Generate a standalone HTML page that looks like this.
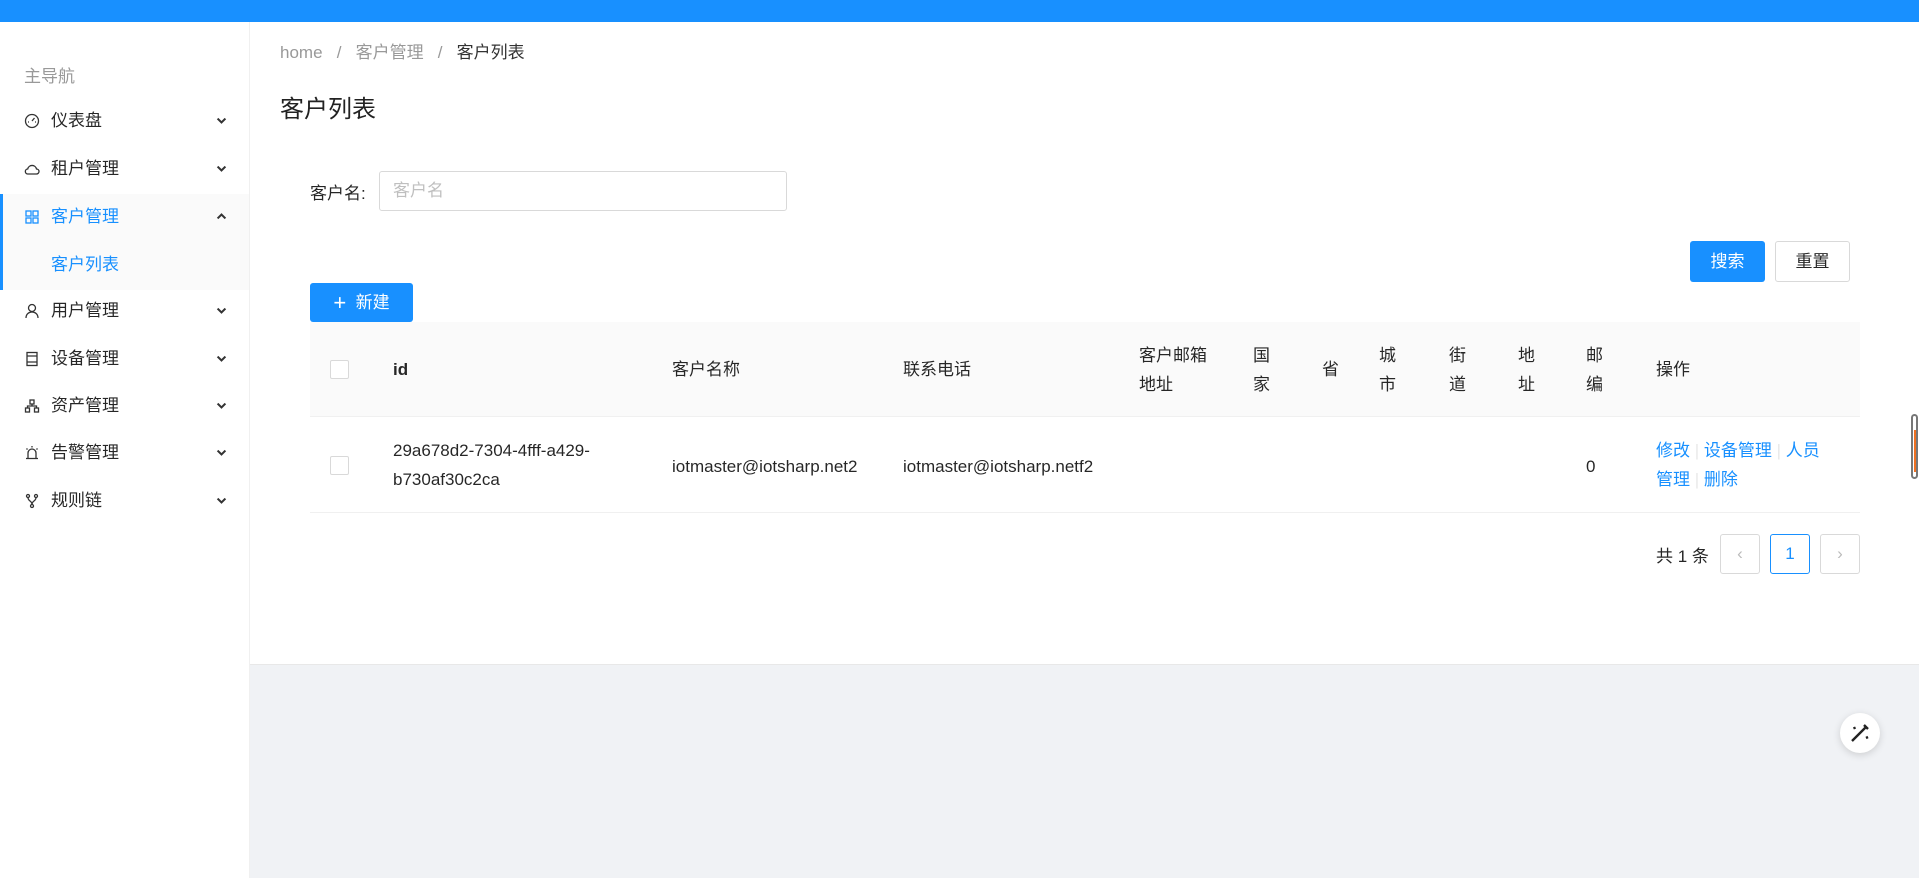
<!DOCTYPE html>
<html><head><meta charset="utf-8"><style>
*{margin:0;padding:0;box-sizing:border-box}
body{width:1919px;height:878px;overflow:hidden;background:#f0f2f5;font-family:"Liberation Sans","Noto Sans CJK SC",sans-serif;font-size:17px;color:rgba(0,0,0,.85);position:relative}
.a{position:absolute;white-space:nowrap}
.top{left:0;top:0;width:1919px;height:22px;background:#1890ff;box-shadow:0 2px 8px rgba(0,0,0,.15)}
.side{left:0;top:22px;width:250px;height:856px;background:#fff;border-right:1px solid #f0f0f0}
.main{left:250px;top:22px;width:1669px;height:643px;background:#fff;border-bottom:1px solid #e8e8e8}
.mi{left:0;width:249px;height:48px;line-height:48px}
.mi .ic{position:absolute;left:24px;top:16px;width:16px;height:16px}
.mi .t{position:absolute;left:51px}
.mi .ch{position:absolute;left:215px;top:17px;width:13px;height:13px}
.btn{border-radius:3px;text-align:center}
.th{top:322px;height:95px;background:#fafafa;border-bottom:1px solid #f0f0f0;left:310px;width:1550px}
.cell{line-height:29px;font-size:17px}
.cb{width:19px;height:19px;border:1px solid #d9d9d9;border-radius:2px;background:#fff}
.pg{width:40px;height:40px;border:1px solid #d9d9d9;border-radius:3px;background:#fff;text-align:center;line-height:38px;color:#bbb}
.lk{color:#1890ff}
.sep{color:#e8e8e8}
</style></head><body>
<div class="a top"></div>
<div class="a side">
 <div class="a" style="left:24px;top:40px;color:#999;font-size:17px">主导航</div>
</div>
<div class="a" style="left:0;top:194px;width:249px;height:96px;background:#fafafa;border-left:3px solid #1890ff"></div>
<div class="a mi" style="top:97px"><svg class="ic" viewBox="0 0 16 16" fill="none" stroke="#333" stroke-width="1.3"><circle cx="8" cy="8" r="6.5"/><path d="M8 8l2.5-3M4 9h1M11 9h1"/></svg><span class="t">仪表盘</span><svg class="ch" viewBox="0 0 10 10" fill="none" stroke="#333" stroke-width="1.6"><path d="M2 3.5l3 3 3-3"/></svg></div>
<div class="a mi" style="top:145px"><svg class="ic" viewBox="0 0 16 16" fill="none" stroke="#333" stroke-width="1.3"><path d="M4 13h8.5a2.5 2.5 0 0 0 0-5 4.5 4.5 0 0 0-8.8 0A2.5 2.5 0 0 0 4 13z"/></svg><span class="t">租户管理</span><svg class="ch" viewBox="0 0 10 10" fill="none" stroke="#333" stroke-width="1.6"><path d="M2 3.5l3 3 3-3"/></svg></div>
<div class="a mi" style="top:193px;color:#1890ff"><svg class="ic" viewBox="0 0 16 16" fill="none" stroke="#1890ff" stroke-width="1.3"><rect x="2" y="2" width="5" height="5"/><rect x="9" y="2" width="5" height="5"/><rect x="2" y="9" width="5" height="5"/><rect x="9" y="9" width="5" height="5"/></svg><span class="t">客户管理</span><svg class="ch" viewBox="0 0 10 10" fill="none" stroke="#333" stroke-width="1.6"><path d="M2 6.5l3-3 3 3"/></svg></div>
<div class="a mi" style="top:241px;color:#1890ff"><span class="t" style="left:51px">客户列表</span></div>
<div class="a mi" style="top:287px"><svg class="ic" viewBox="0 0 16 16" fill="none" stroke="#333" stroke-width="1.3"><circle cx="8" cy="5" r="3.5"/><path d="M2 15c0-4 3-6 6-6s6 2 6 6"/></svg><span class="t">用户管理</span><svg class="ch" viewBox="0 0 10 10" fill="none" stroke="#333" stroke-width="1.6"><path d="M2 3.5l3 3 3-3"/></svg></div>
<div class="a mi" style="top:335px"><svg class="ic" viewBox="0 0 16 16" fill="none" stroke="#333" stroke-width="1.3"><rect x="3" y="1.5" width="10" height="13"/><path d="M3 5h10M3 11h10"/></svg><span class="t">设备管理</span><svg class="ch" viewBox="0 0 10 10" fill="none" stroke="#333" stroke-width="1.6"><path d="M2 3.5l3 3 3-3"/></svg></div>
<div class="a mi" style="top:382px"><svg class="ic" viewBox="0 0 16 16" fill="none" stroke="#333" stroke-width="1.3"><rect x="6" y="2" width="4" height="4"/><rect x="1.5" y="10" width="4" height="4"/><rect x="10.5" y="10" width="4" height="4"/><path d="M8 6v2M3.5 10V8h9v2"/></svg><span class="t">资产管理</span><svg class="ch" viewBox="0 0 10 10" fill="none" stroke="#333" stroke-width="1.6"><path d="M2 3.5l3 3 3-3"/></svg></div>
<div class="a mi" style="top:429px"><svg class="ic" viewBox="0 0 16 16" fill="none" stroke="#333" stroke-width="1.3"><path d="M4 13V8a4 4 0 0 1 8 0v5M2 13.5h12M8 1v1.5M2.5 3.5l1 1M13.5 3.5l-1 1"/></svg><span class="t">告警管理</span><svg class="ch" viewBox="0 0 10 10" fill="none" stroke="#333" stroke-width="1.6"><path d="M2 3.5l3 3 3-3"/></svg></div>
<div class="a mi" style="top:477px"><svg class="ic" viewBox="0 0 16 16" fill="none" stroke="#333" stroke-width="1.3"><circle cx="4" cy="3" r="1.5"/><circle cx="12" cy="3" r="1.5"/><circle cx="8" cy="13" r="1.5"/><path d="M4 4.5c0 4 4 3 4 7M12 4.5c0 4-4 3-4 7"/></svg><span class="t">规则链</span><svg class="ch" viewBox="0 0 10 10" fill="none" stroke="#333" stroke-width="1.6"><path d="M2 3.5l3 3 3-3"/></svg></div>

<div class="a main"></div>
<div class="a" style="left:280px;top:38px;color:#999">home &nbsp;&nbsp;/&nbsp;&nbsp; 客户管理 &nbsp;&nbsp;/&nbsp;&nbsp; <span style="color:#333">客户列表</span></div>
<div class="a" style="left:280px;top:89px;font-size:24px;color:#222">客户列表</div>
<div class="a" style="left:310px;top:179px">客户名:</div>
<div class="a" style="left:379px;top:171px;width:408px;height:40px;border:1px solid #d9d9d9;border-radius:3px;padding:0 13px;line-height:38px;color:#bfbfbf">客户名</div>
<div class="a btn" style="left:1690px;top:241px;width:75px;height:41px;background:#1890ff;color:#fff;line-height:41px">搜索</div>
<div class="a btn" style="left:1775px;top:241px;width:75px;height:41px;border:1px solid #d9d9d9;line-height:39px">重置</div>
<div class="a btn" style="left:310px;top:283px;width:103px;height:39px;background:#1890ff;color:#fff;line-height:39px"><span style="font-size:22px;vertical-align:-2px">+</span>&nbsp; 新建</div>

<div class="a th"></div>
<div class="a" style="left:310px;top:417px;width:1550px;height:96px;border-bottom:1px solid #f0f0f0"></div>
<div class="a cb" style="left:330px;top:360px"></div>
<div class="a cb" style="left:330px;top:456px"></div>
<div class="a cell" style="left:393px;top:355px;font-weight:bold">id</div>
<div class="a cell" style="left:672px;top:355px">客户名称</div>
<div class="a cell" style="left:903px;top:355px">联系电话</div>
<div class="a cell" style="left:1139px;top:341px">客户邮箱<br>地址</div>
<div class="a cell" style="left:1253px;top:341px">国<br>家</div>
<div class="a cell" style="left:1322px;top:355px">省</div>
<div class="a cell" style="left:1379px;top:341px">城<br>市</div>
<div class="a cell" style="left:1449px;top:341px">街<br>道</div>
<div class="a cell" style="left:1518px;top:341px">地<br>址</div>
<div class="a cell" style="left:1586px;top:341px">邮<br>编</div>
<div class="a cell" style="left:1656px;top:355px">操作</div>
<div class="a cell" style="left:393px;top:436px">29a678d2-7304-4fff-a429-<br>b730af30c2ca</div>
<div class="a cell" style="left:672px;top:452px">iotmaster@iotsharp.net2</div>
<div class="a cell" style="left:903px;top:452px">iotmaster@iotsharp.netf2</div>
<div class="a cell" style="left:1586px;top:452px">0</div>
<div class="a cell" style="left:1656px;top:436px"><span class="lk">修改</span> <span class="sep">|</span> <span class="lk">设备管理</span> <span class="sep">|</span> <span class="lk">人员</span><br><span class="lk">管理</span> <span class="sep">|</span> <span class="lk">删除</span></div>

<div class="a" style="left:1656px;top:542px">共 1 条</div>
<div class="a pg" style="left:1720px;top:534px">&lsaquo;</div>
<div class="a pg" style="left:1770px;top:534px;border-color:#1890ff;color:#1890ff">1</div>
<div class="a pg" style="left:1820px;top:534px">&rsaquo;</div>

<div class="a" style="left:1840px;top:713px;width:40px;height:40px;border-radius:50%;background:#fff;box-shadow:0 2px 8px rgba(0,0,0,.15)"><svg width="40" height="40" viewBox="0 0 40 40" fill="none" stroke="#222" stroke-width="2.4"><path d="M12 28l14-14M24 12l4 4M14 14l1 2M28 24l-2 1"/></svg></div>
<div class="a" style="left:1911px;top:414px;width:7px;height:65px;border:2px solid #777;border-radius:4px;background:#fff"><div style="margin:14px 0 0 1px;width:2px;height:42px;background:#f07020"></div></div>
</body></html>
